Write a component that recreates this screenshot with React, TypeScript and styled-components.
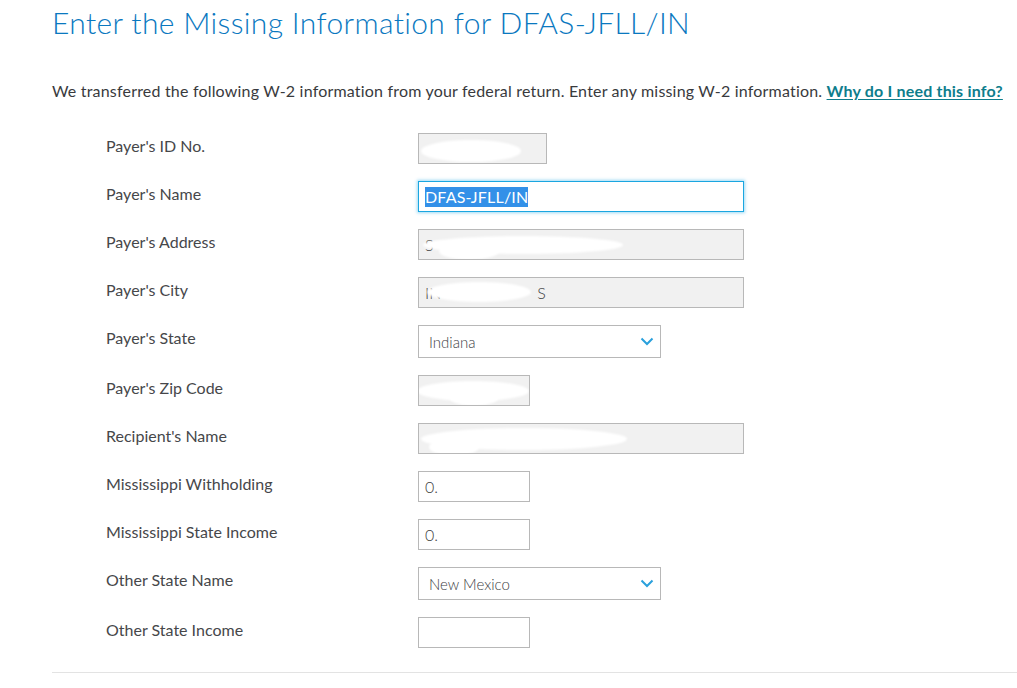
import styled, { createGlobalStyle } from "styled-components";

const Global = createGlobalStyle`
  html, body {
    margin: 0;
    padding: 0;
    background: #fff;
  }
  body {
    font-family: Lato, "Open Sans", sans-serif;
    color: #393a3d;
  }
`;

const Page = styled.div`
  padding: 0 0 0 52px;
  width: 965px;
`;

const Title = styled.h1`
  margin: 0;
  padding-top: 4px;
  font-size: 30px;
  line-height: 36px;
  font-weight: 300;
  color: #0a78bf;
  letter-spacing: 0.35px;
`;

const Intro = styled.p`
  margin: 41px 0 0;
  font-size: 16px;
  line-height: 20px;
  color: #393a3d;
  white-space: nowrap;
  letter-spacing: 0.19px;
`;

const HelpLink = styled.a`
  color: #0e7d8c;
  font-weight: 700;
  text-decoration: underline;
  text-underline-offset: 2px;
`;

const Form = styled.div`
  display: flex;
  flex-direction: column;
  gap: 17px;
  margin: 32px 0 0 54px;
`;

const Row = styled.div`
  display: flex;
  align-items: flex-start;
`;

const Label = styled.div`
  width: 312px;
  padding-top: 3px;
  font-size: 16px;
  line-height: 20px;
  color: #46474a;
`;

const Field = styled.div<{ $w: number; $grey?: boolean; $focus?: boolean }>`
  position: relative;
  box-sizing: border-box;
  width: ${(p) => p.$w}px;
  height: 31px;
  border: 1px solid ${(p) => (p.$focus ? "#1aa6e0" : "#b8b8b8")};
  box-shadow: ${(p) => (p.$focus ? "0 0 3px 1px rgba(40, 170, 230, 0.45)" : "none")};
  background: ${(p) => (p.$grey ? "#f1f1f1" : "#fff")};
  display: flex;
  align-items: center;
  padding-left: 6px;
  font-size: 16px;
  font-weight: 300;
  color: #3d3e41;
  overflow: hidden;
`;

const Selected = styled.span`
  background: #3390e8;
  color: #fff;
  line-height: 20px;
  font-weight: 400;
  letter-spacing: 0.2px;
`;

const Tail = styled.span<{ $at: number }>`
  margin-left: ${(p) => p.$at}px;
`;

const Select = styled.div`
  box-sizing: border-box;
  width: 243px;
  height: 33px;
  border: 1px solid #b8b8b8;
  background: #fff;
  display: flex;
  align-items: center;
  justify-content: space-between;
  padding: 0 6px 0 10px;
  font-size: 15px;
  font-weight: 300;
  color: #404144;
`;

const Blob = styled.span`
  position: absolute;
  background: #fff;
  border-radius: 50%;
  filter: blur(1px);
`;

const Divider = styled.hr`
  margin: 24px 0 0;
  border: none;
  border-top: 1px solid #e3e3e3;
  width: 100%;
`;

const Chevron = () => (
  <svg width="14" height="9" viewBox="0 0 14 9">
    <path d="M1.5 1.5 L7 7 L12.5 1.5" fill="none" stroke="#2aa0dc" strokeWidth="2" />
  </svg>
);

type BlobSpec = { l: number; t: number; w: number; h: number };

const Redacted = ({
  w,
  blobs,
  text,
  tail,
}: {
  w: number;
  blobs: BlobSpec[];
  text?: string;
  tail?: { at: number; text: string };
}) => (
  <Field $w={w} $grey>
    {text}
    {tail && <Tail $at={tail.at}>{tail.text}</Tail>}
    {blobs.map((b, i) => (
      <Blob key={i} style={{ left: b.l, top: b.t, width: b.w, height: b.h }} />
    ))}
  </Field>
);

export default function App() {
  return (
    <Page>
      <Global />
      <Title>Enter the Missing Information for DFAS-JFLL/IN</Title>
      <Intro>
        We transferred the following W-2 information from your federal return. Enter any missing W-2
        information. <HelpLink href="#">Why do I need this info?</HelpLink>
      </Intro>
      <Form>
        <Row>
          <Label>Payer's ID No.</Label>
          <Redacted w={129} blobs={[{ l: 2, t: 6, w: 100, h: 22 }]} />
        </Row>
        <Row>
          <Label>Payer's Name</Label>
          <Field $w={326} $focus>
            <Selected>DFAS-JFLL/IN</Selected>
          </Field>
        </Row>
        <Row>
          <Label>Payer's Address</Label>
          <Redacted
            w={326}
            text="S"
            blobs={[
              { l: 4, t: 6, w: 200, h: 18 },
              { l: 20, t: 12, w: 60, h: 18 },
            ]}
          />
        </Row>
        <Row>
          <Label>Payer's City</Label>
          <Redacted
            w={326}
            text="IN"
            tail={{ at: 96, text: "S" }}
            blobs={[{ l: 8, t: 4, w: 104, h: 20 }]}
          />
        </Row>
        <Row>
          <Label>Payer's State</Label>
          <Select>
            Indiana
            <Chevron />
          </Select>
        </Row>
        <Row>
          <Label>Payer's Zip Code</Label>
          <Redacted w={112} blobs={[{ l: -2, t: 5, w: 112, h: 20 }, { l: 30, t: 12, w: 50, h: 18 }]} />
        </Row>
        <Row>
          <Label>Recipient's Name</Label>
          <Redacted w={326} blobs={[{ l: 2, t: 4, w: 206, h: 22 }, { l: 10, t: 14, w: 50, h: 18 }]} />
        </Row>
        <Row>
          <Label>Mississippi Withholding</Label>
          <Field $w={112}>0.</Field>
        </Row>
        <Row>
          <Label>Mississippi State Income</Label>
          <Field $w={112}>0.</Field>
        </Row>
        <Row>
          <Label>Other State Name</Label>
          <Select>
            New Mexico
            <Chevron />
          </Select>
        </Row>
        <Row>
          <Label>Other State Income</Label>
          <Field $w={112} />
        </Row>
      </Form>
      <Divider />
    </Page>
  );
}
